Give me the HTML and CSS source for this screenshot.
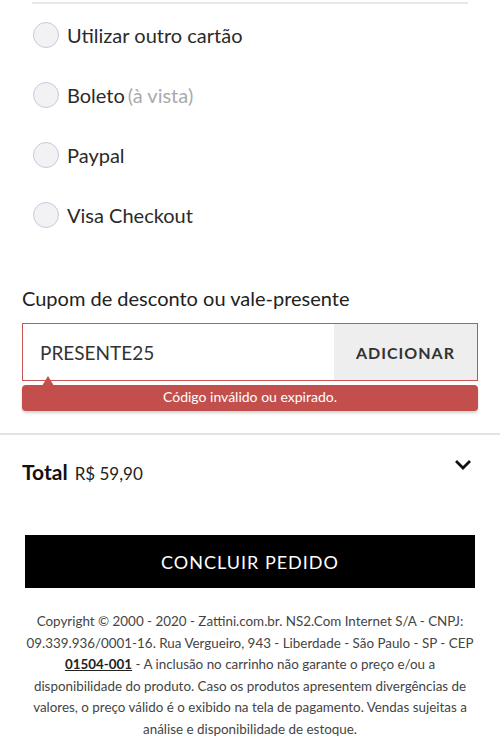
FILE: index.html
```html
<!DOCTYPE html>
<html lang="pt-BR">
<head>
<meta charset="utf-8">
<link rel="stylesheet" href="styles.css">
</head>
<body>
<div class="page">
  <div class="top-rule"></div>
  <ul class="options">
    <li class="option"><span class="radio"></span><span class="opt-label">Utilizar outro cartão</span></li>
    <li class="option"><span class="radio"></span><span class="opt-label">Boleto</span><span class="opt-note">(à vista)</span></li>
    <li class="option"><span class="radio"></span><span class="opt-label">Paypal</span></li>
    <li class="option"><span class="radio"></span><span class="opt-label">Visa Checkout</span></li>
  </ul>

  <section class="coupon">
    <div class="coupon-title">Cupom de desconto ou vale-presente</div>
    <div class="coupon-field">
      <div class="coupon-input">PRESENTE25</div>
      <button class="coupon-btn">ADICIONAR</button>
    </div>
    <div class="coupon-error">Código inválido ou expirado.</div>
  </section>

  <div class="total-row">
    <div class="total"><span class="total-label">Total</span><span class="total-value">R$ 59,90</span></div>
    <svg class="chevron" width="16" height="10" viewBox="0 0 16 10"><polyline points="2,2 8,8 14,2" fill="none" stroke="#111" stroke-width="2.8" stroke-linecap="square"/></svg>
  </div>

  <div class="cta-wrap"><button class="cta">CONCLUIR PEDIDO</button></div>

  <p class="footer">Copyright © 2000 - 2020 - Zattini.com.br. NS2.Com Internet S/A - CNPJ:<br>09.339.936/0001-16. Rua Vergueiro, 943 - Liberdade - São Paulo - SP - CEP<br><a class="cep">01504-001</a> - A inclusão no carrinho não garante o preço e/ou a<br>disponibilidade do produto. Caso os produtos apresentem divergências de<br>valores, o preço válido é o exibido na tela de pagamento. Vendas sujeitas a<br>análise e disponibilidade de estoque.</p>
</div>
</body>
</html>
```

FILE: styles.css
```css
* { box-sizing: border-box; }
html, body { margin: 0; padding: 0; background: #fff; }
body { font-family: "Lato", "Open Sans", sans-serif; color: #222; }
.page { width: 500px; overflow: hidden; }

.top-rule { margin: 2px 32px 0; border-top: 2px solid #e8e8e8; }

.options { list-style: none; margin: 0; padding: 1px 0 0 33px; }
.option { display: flex; align-items: center; height: 60px; }
.radio {
  width: 26px; height: 26px; border-radius: 50%;
  border: 1.5px solid #c6c9df; background: #f2f2f4;
  margin-right: 8px; flex: none;
}
.opt-label { font-size: 20px; color: #2a2a2a; }
.opt-note { font-size: 20px; color: #aaa; margin-left: 3px; }

.coupon { padding: 38px 22px 0; }
.coupon-title { font-size: 20px; color: #222; line-height: 30px; }
.coupon-field {
  margin-top: 10px; display: flex; height: 58px;
  border: 1px solid #c85552;
}
.coupon-input { flex: 1; display: flex; align-items: center; padding-left: 17px; font-size: 19px; color: #333; background: #fff; }
.coupon-btn {
  width: 143px; border: 0; background: #eeeeee; font-family: inherit;
  font-size: 16px; font-weight: 700; letter-spacing: 1px; color: #333;
}
.coupon-error {
  position: relative; margin-top: 4px; height: 26px; border-radius: 4px;
  background: #c24f4c; color: #fff; font-size: 14px; text-align: center; line-height: 24px;
  box-shadow: 0 2px 3px rgba(0,0,0,.18);
}
.coupon-error::before {
  content: ""; position: absolute; left: 20px; top: -9px;
  border-left: 6px solid transparent; border-right: 6px solid transparent;
  border-bottom: 10px solid #c24f4c;
}

.total-row {
  margin-top: 22px; border-top: 2px solid #e2e2e2;
  display: flex; align-items: center; justify-content: space-between;
  padding: 0 29px 0 22px; height: 74px;
}
.total { display: flex; align-items: baseline; gap: 7px; }
.total-label { font-size: 21px; font-weight: 700; color: #111; }
.total-value { font-size: 17px; color: #222; }
.chevron { margin-top: -12px; }

.cta-wrap { padding: 28px 25px 0; }
.cta {
  width: 100%; height: 53px; background: #000; color: #fff; border: 0;
  font-family: inherit; font-size: 18px; letter-spacing: 1px;
}

.footer {
  margin: 23px 0 0; padding: 0 6px; text-align: center;
  font-size: 13.4px; line-height: 21.6px; color: #444;
}
.cep { font-weight: 700; text-decoration: underline; color: #222; }
```
